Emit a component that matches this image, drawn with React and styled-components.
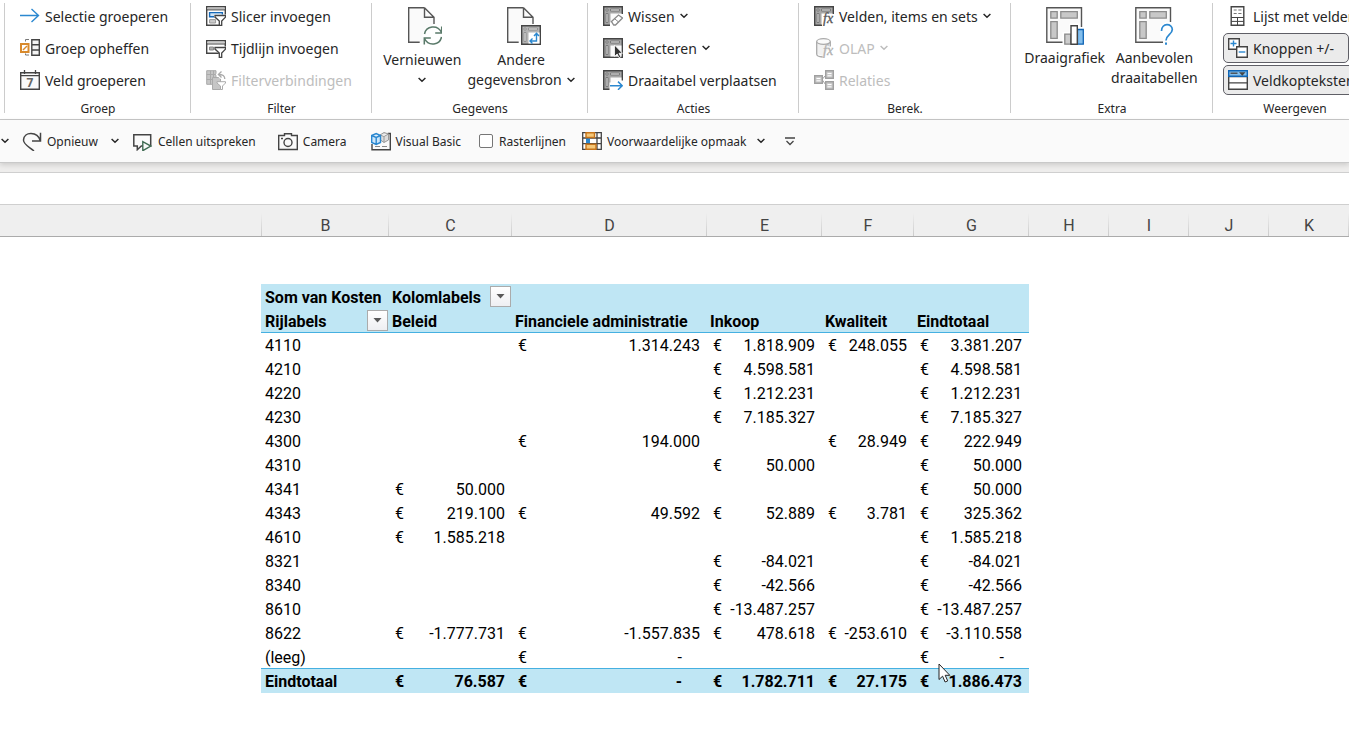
import React, { useState } from 'react'
import styled, { createGlobalStyle, css } from 'styled-components'

const GlobalStyle = createGlobalStyle`
  * {
    box-sizing: border-box;
  }
  body {
    margin: 0;
    background: #ffffff;
    overflow: hidden;
  }
  button, input {
    font: inherit;
    color: inherit;
    margin: 0;
  }
`

const Page = styled.div`
  display: flex;
  flex-direction: column;
  min-height: 100vh;
  overflow: hidden;
  font-family: 'Noto Sans', sans-serif;
  font-size: 14px;
  color: #262626;
`

/* ribbon */

const Ribbon = styled.div`
  display: flex;
  padding: 0 0 1px 4px;
  background: #ffffff;
  border-bottom: 1px solid #c8c8c8;
  overflow: hidden;
`

const Group = styled.section`
  display: flex;
  flex-direction: column;
  flex: none;
  width: ${(p) => p.$width}px;
  padding: 1px 10px 0;
  background: linear-gradient(#cccccc, #cccccc) 0 3px / 1px 110px no-repeat;
`

const GroupBody = styled.div`
  display: flex;
  flex-direction: ${(p) => (p.$row ? 'row' : 'column')};
  align-items: flex-start;
  justify-content: ${(p) => (p.$row ? 'center' : 'flex-start')};
  gap: 2px;
  height: 99px;
  padding-left: ${(p) => (p.$row ? 0 : 1)}px;
`

const GroupLabel = styled.div`
  padding-left: 2px;
  font-size: 12px;
  line-height: 18px;
  text-align: center;
`

const SmallButton = styled.button`
  display: flex;
  align-items: center;
  gap: 5px;
  height: 30px;
  padding: 0 4px;
  border: 1px solid transparent;
  border-radius: 5px;
  background: none;
  line-height: 20px;
  white-space: nowrap;

  &:disabled {
    color: #bdbdbd;
  }

  ${(p) =>
    p.$pressed &&
    css`
      min-width: 126px;
      background: #ebebeb;
      border-color: #5f5f66;
    `}
`

const ToolText = styled.span`
  padding-top: 2px;
`

const BigButton = styled.button`
  display: flex;
  flex-direction: column;
  align-items: center;
  gap: ${(p) => p.$gap}px;
  padding: 5px 2px 0;
  border: none;
  background: none;
  line-height: 20px;
  white-space: nowrap;
`

const Caption = styled.span`
  display: flex;
  flex-direction: column;
  align-items: center;
`

const CaptionLine = styled.span`
  display: flex;
  align-items: center;
  justify-content: center;
  gap: 5px;
  min-height: 20px;
`

/* quick access toolbar */

const QuickBar = styled.div`
  display: flex;
  align-items: center;
  height: 43px;
  padding-left: 1px;
  background: #fafafa;
  border-bottom: 1px solid #c9c9c9;
  box-shadow: 0 2px 5px rgba(0, 0, 0, 0.14);
  font-size: 12px;
  position: relative;
  white-space: nowrap;
`

const QuickButton = styled.button`
  display: flex;
  align-items: center;
  gap: 5px;
  height: 30px;
  padding: 0;
  margin-right: ${(p) => p.$after || 0}px;
  border: none;
  background: none;
`

const QuickMenu = styled.span`
  display: flex;
  align-items: center;
  gap: 10px;
`

const QuickCheck = styled.label`
  display: flex;
  align-items: center;
  gap: 6px;
  margin-right: 16px;
`

const CheckBox = styled.input`
  appearance: none;
  width: 14px;
  height: 14px;
  border: 1px solid #767676;
  border-radius: 2px;
  background: #ffffff;

  &:checked {
    background: #1f7a4a;
  }
`

/* sheet */

const BarGap = styled.div`
  height: 9px;
  background: #eeedec;
`

const FormulaBar = styled.input`
  display: block;
  width: 100%;
  height: 33px;
  padding: 0 12px;
  border: solid #cfcfcf;
  border-width: 1px 0;
  border-radius: 0;
  background: #ffffff;
  outline: none;
`

const ColumnHeads = styled.div`
  display: flex;
  height: 32px;
  padding-top: 8px;
  background: #efefef;
  border-bottom: 1px solid #ababab;
  overflow: hidden;
`

const ColumnHead = styled.div`
  flex: none;
  width: ${(p) => p.$width}px;
  background: linear-gradient(#efefef, #cbcbcb) right / 1px 100% no-repeat;
  font-family: Roboto, sans-serif;
  font-size: 16px;
  line-height: 25px;
  text-align: center;
  color: #444444;
`

const Sheet = styled.main`
  flex: 1;
  position: relative;
  padding: 47px 0 53px 261px;
  background: #ffffff;
`

const Pivot = styled.table`
  table-layout: fixed;
  width: 768px;
  border-collapse: separate;
  border-spacing: 0;
  font-family: Roboto, sans-serif;
  font-size: 16px;
  color: #000000;

  td, th {
    height: 24px;
    padding: 3px 0 0 3px;
    line-height: 20px;
    text-align: left;
    vertical-align: top;
    white-space: nowrap;
  }
  td:first-child, th:first-child {
    padding-left: 4px;
  }
  tbody th {
    font-weight: 400;
  }
  thead th {
    padding-top: 4px;
    background: #bfe6f4;
    font-weight: 700;
  }
  thead tr:last-child th {
    height: 25px;
  }
  thead tr:last-child th, tbody tr:last-child > * {
    border-bottom: 1px solid #45b0e1;
  }
  tfoot th, tfoot td {
    background: #bfe6f4;
    font-weight: 700;
  }
`

const HeadCell = styled.div`
  display: flex;
  align-items: flex-start;
  justify-content: space-between;
  height: 20px;
  padding-right: 1px;
`

const FilterButton = styled.button`
  display: flex;
  align-items: center;
  justify-content: center;
  width: 21px;
  height: 21px;
  margin-top: -2px;
  padding: 0;
  border: 1px solid #ababab;
  background: linear-gradient(#ffffff, #eeeff2);
`

const Money = styled.div`
  display: flex;
  justify-content: space-between;
  padding: 0 ${(p) => (p.$empty ? 25 : 7)}px 0 3px;
`

const Pointer = styled.svg`
  position: absolute;
  left: 938px;
  top: 426px;
`

/* icons */

const DARK = '#444444'
const BLUE = '#2b88d0'

const Svg = ({ size = 20, children, ...rest }) => (
  <svg width={size} height={size} viewBox={`0 0 ${size} ${size}`} fill="none" stroke={DARK} aria-hidden="true" {...rest}>
    {children}
  </svg>
)

const Chevron = () => (
  <svg width="8" height="6" viewBox="0 0 8 6" fill="none" stroke="currentColor" strokeWidth="1.5" aria-hidden="true">
    <path d="M.6 1L4 4.200 7.400 1" />
  </svg>
)

const Funnel = ({ color = DARK }) => (
  <path d="M9 9.5h10.5v1.6l-3.8 4v4.4h-2.4v-4.4L9 11.1z" fill="#fff" stroke={color} strokeWidth="1.3" />
)

const ArrowIcon = () => (
  <Svg stroke={BLUE} strokeWidth="1.4">
    <path d="M0 9.5h18.5M11.5 3l7 6.5-7 6.5" />
  </Svg>
)

const UngroupIcon = () => (
  <Svg>
    <path d="M5.5 3.5v-2H9M5.5 15.5v1.5H9" stroke="#777" />
    <path d="M1 6h7.5v8H1z" fill="#fff" stroke="#d98a2c" strokeWidth="2" />
    <path d="M3 12l4-4" stroke="#d98a2c" strokeWidth="1.4" />
    <path d="M11.8 1.7h7.5v15.6h-7.5zM11.8 6.8h7.5M11.8 12h7.5" fill="#f4f4f4" strokeWidth="1.4" />
  </Svg>
)

const CalendarIcon = () => (
  <Svg>
    <path d="M.7 2.7h18.6v16.6H.7z" fill="#fafafa" strokeWidth="1.4" />
    <path d="M.7 5.7h18.6M4.5 0v4M15.5 0v4" strokeWidth="1.3" />
    <text x="10" y="17" fontSize="12" fontWeight="700" textAnchor="middle" fill="#666" stroke="none">7</text>
  </Svg>
)

const SlicerIcon = () => (
  <Svg>
    <path d="M.7.7h18.6v18.6H.7z" fill="#fff" strokeWidth="1.4" />
    <path d="M1.4 1.4h17.2v2H1.4z" fill="#bbb" stroke="none" />
    <path d="M.7 3.9h18.6" />
    <path d="M3.6 6.6h12.8v4.2H3.6z" fill="#cfe4f7" stroke="#1769b8" strokeWidth="1.4" />
    <path d="M3.6 13.6h6v3.4h-6z" fill="#ccc" stroke="#999" />
    <path d="M13 20v-4.500L8 11V8.500h12V20z" fill="#fff" stroke="none" />
    <Funnel />
  </Svg>
)

const TimelineIcon = () => (
  <Svg>
    <path d="M.7 2.7h18.6v12.6H.7z" fill="#fff" strokeWidth="1.4" />
    <path d="M1.4 3.4h17.2v2H1.4z" fill="#ccc" stroke="none" />
    <path d="M.7 6h18.6" />
    <path d="M3.5 9h4v3h-4z" fill="#aaa" stroke="#888" />
    <path d="M13 20v-4.500L8 11V8.500h12V20z" fill="#fff" stroke="none" />
    <Funnel />
  </Svg>
)

const FilterLinkIcon = () => (
  <Svg stroke="#aaa">
    <path d="M.7.7H10v13.6H.7z" fill="#c6c6c6" />
    <path d="M.7 4.5H10M4.5.7v13.6M7.5.7v13.6M.7 9.5H10" />
    <path d="M6.5 7.5h8v12h-8z" fill="#c6c6c6" />
    <path d="M18.8 9.5c0-4-2-5-6.5-5M15.5 1l-3.6 3.5 3.6 3.5" stroke="#fff" strokeWidth="3" />
    <path d="M18.8 9c0-3.600-2-4.500-6.500-4.500M15.500 1.500l-3.100 3 3.100 3" strokeWidth="1.300" />
    <path d="M11 11.700h8.500v1.300l-3 3v3.500h-2v-3.500l-3.500-3z" fill="#fff" />
  </Svg>
)

const PivotBase = ({ stroke = DARK }) => (
  <>
    <path d="M.7.7h18.6v18.6H.7z" fill="#a6a6a6" stroke={stroke} strokeWidth="1.4" />
    <path d="M7.500 7.500h11v11h-11z" fill="#fafafa" stroke="none" />
    <path d="M3 3h2v2H3zM7.500 3h9v2h-9zM3 7.500h2v9H3z" fill="#d8d8d8" stroke="#6e6e6e" strokeWidth=".8" />
  </>
)

const ClearIcon = () => (
  <Svg>
    <PivotBase />
    <path d="M7 20V17l8-9h6v12z" fill="#fff" stroke="none" />
    <path d="M8.500 15.500l7-6.500 4 3-7 7h-1.800z" fill="#fff" stroke="#8a8a8a" strokeWidth="1.300" />
    <path d="M11.500 12.700l4 3.200" stroke="#8a8a8a" />
  </Svg>
)

const SelectIcon = () => (
  <Svg>
    <PivotBase />
    <path d="M11.500 7v11.500l2.700-2.500 1.800 3.700 1.800-.9-1.800-3.500h3.500z" fill="#333" stroke="#fff" strokeWidth=".8" />
  </Svg>
)

const MoveIcon = () => (
  <Svg>
    <PivotBase />
    <path d="M6.500 12.500h6v-2h8V20h-14z" fill="#fff" stroke="none" />
    <path d="M7 15.700h12M15 11.600l4.200 4.100-4.200 4.100" stroke={BLUE} strokeWidth="1.500" />
  </Svg>
)

const Fx = ({ color }) => (
  <text x="9" y="17" fontFamily="Liberation Serif, serif" fontStyle="italic" fontSize="14" fill={color} stroke={color} strokeWidth=".3">fx</text>
)

const FieldsIcon = () => (
  <Svg>
    <PivotBase />
    <path d="M8 8h12v12H8z" fill="#fff" stroke="none" />
    <Fx color="#555" />
  </Svg>
)

const OlapIcon = () => (
  <Svg stroke="#aaa" strokeWidth="1.300">
    <path d="M3 4h13v5l-7 9-6-2z" fill="#f1f1f1" stroke="none" />
    <path d="M2.700 3.500v12.500c0 1.500 2 2.800 6 3M16.300 3.500v5" />
    <ellipse cx="9.500" cy="3.500" rx="6.800" ry="2.800" fill="#fafafa" />
    <Fx color="#b0b0b0" />
  </Svg>
)

const RelationsIcon = () => (
  <Svg stroke="#a0a0a0">
    <path d="M8 9.500l3.500-4M8 9.500l3.500 5" />
    <path d="M.7 5.700h7.600v7.600H.7zM11.700.7h7.600v7.600h-7.600zM11.700 11.700h7.600v7.600h-7.600z" fill="#c9c9c9" strokeWidth="1.400" />
    <path d="M2.500 8.500h4M2.500 10.800h4M13.500 3.500h4M13.500 5.800h4M13.500 14.500h4M13.500 16.800h4" stroke="#fff" />
  </Svg>
)

const FieldListIcon = () => (
  <Svg>
    <path d="M3.200.7h12.600v18.600H3.200z" fill="#fff" strokeWidth="1.400" />
    <path d="M3.200 11.500h12.600M3.200 15.400h12.600M9.500 11.500v7.800" />
    <path d="M5.700 4h3M10.300 4h3.200M5.700 7.500h3M10.300 7.500h3.200" stroke="#777" />
  </Svg>
)

const PlusMinusIcon = () => (
  <Svg>
    <path d="M.7.7h10.600v10.600H.7z" fill="#fff" strokeWidth="1.400" />
    <path d="M5.500 2.500v6M2.500 5.500h6" stroke={BLUE} strokeWidth="1.400" />
    <path d="M8.700 8.700h10.600v10.600H8.700z" fill="#fff" strokeWidth="1.400" />
    <path d="M10.700 14h6.600" stroke={BLUE} strokeWidth="1.400" />
  </Svg>
)

const HeadersIcon = () => (
  <Svg>
    <path d="M.7 6.500h18.600v12.800H.7zM.7 12.900h18.600" fill="#fff" strokeWidth="1.400" />
    <path d="M.7.7h18.600v5.600H.7z" fill="#83beec" stroke="#0f64b4" strokeWidth="1.400" />
    <path d="M2.500 3.200h7" strokeWidth="1.300" />
    <path d="M11 2.300h6.500l-3.200 3.500z" fill={DARK} stroke="none" />
  </Svg>
)

const DocumentShape = () => (
  <>
    <path d="M6.700 1.700h15.800l9.500 9.600v25H6.700z" fill="#fafafa" stroke="none" />
    <path d="M22.500 1.700H6.700v34.600h11M22.500 1.700v9.600H32M22.500 1.700l9.500 9.600V18" stroke="#555" strokeWidth="1.400" />
  </>
)

const RefreshIcon = () => (
  <Svg size={40}>
    <DocumentShape />
    <circle cx="31" cy="29.500" r="10.500" fill="#fff" stroke="none" />
    <path d="M22.500 28c1.500-8 13-10 17-1.500M39.700 20.500V27h-6.500M39.500 31c-1.500 8-13 10-17 1.500M22.300 38.500V32h6.500" stroke="#5a7a6a" strokeWidth="1.500" />
  </Svg>
)

const SourceIcon = () => (
  <Svg size={40}>
    <DocumentShape />
    <g transform="translate(20 19)">
      <path d="M.7.7h18.600v18.600H.7z" fill="#b5b5b5" strokeWidth="1.400" />
      <path d="M7.500 7.500h11v11h-11z" fill="#fff" stroke="none" />
      <path d="M3 3h2v2H3zM7.500 3h9v2h-9zM3 7.500h2v9H3z" fill="#ddd" stroke="#888" strokeWidth=".8" />
      <path d="M15.500 8.500v7.500H9M13 11l2.500-2.700L18 11M11.500 13.500L9 16l2.500 2.500" stroke={BLUE} strokeWidth="1.400" />
    </g>
  </Svg>
)

const BigPivotShape = () => (
  <>
    <path d="M1.800 1.800h34.700v34.400H1.800z" fill="#fafafa" stroke="#555" strokeWidth="1.400" />
    <path d="M5.800 5.700h6.400v6.400H5.800zM15.800 5.700h16.500v6.400H15.800zM5.800 15.700h6.400v16.600H5.800z" fill="#c8c8c8" stroke="#8c8c8c" strokeWidth="1.300" />
  </>
)

const ChartIcon = () => (
  <Svg size={40}>
    <BigPivotShape />
    <path d="M17.500 40V26h7v-8.500h10V21H40v19z" fill="#fff" stroke="none" />
    <path d="M19.800 28.200h5.900v10h-5.900z" fill="#ccc" stroke="#888" strokeWidth="1.300" />
    <path d="M32.500 23.500h5.800v14.700h-5.800z" fill="#83beec" stroke="#0f64b4" strokeWidth="1.300" />
    <path d="M26 19.700h6.300v18.500H26z" fill="#fff" strokeWidth="1.400" />
  </Svg>
)

const RecommendIcon = () => (
  <Svg size={40}>
    <BigPivotShape />
    <path d="M29 40v-7.500l-3-4V20l6-4h9v24z" fill="#fff" stroke="none" />
    <path d="M27.500 25c0-8.500 10.800-7.800 10.800-1.500 0 5-6.300 5.500-6.300 11" stroke={BLUE} strokeWidth="1.700" />
    <path d="M32 36.500v2.200" stroke={BLUE} strokeWidth="2" />
  </Svg>
)

const RedoIcon = () => (
  <Svg strokeWidth="1.500">
    <path d="M18.500 1.700V10H10M18.300 9.800C15.500.3 2 .3 1.500 9c-.2 4.500 6 7 10.500 11" />
  </Svg>
)

const SpeakIcon = () => (
  <Svg>
    <path d="M.8 3.700h16.900V15H8.300l-4 3.700V15H.8z" fill="#fafafa" strokeWidth="1.500" />
    <path d="M9.800 10.700v9l8-4.600z" fill="#fafafa" stroke="#3f6b52" strokeWidth="1.400" />
  </Svg>
)

const CameraIcon = () => (
  <Svg strokeWidth="1.400">
    <path d="M.7 4.500h5.800V2.700h7v1.800h5.800v14H.7z" fill="#fafafa" />
    <circle cx="10" cy="11.500" r="4" />
    <path d="M3 7.500h2" />
  </Svg>
)

const BasicIcon = () => (
  <Svg>
    <path d="M1 13v5.700h18.300V2.500h-2.500" strokeWidth="1.400" />
    <path d="M4 15.500h5M11 15.500h5" stroke="#888" />
    <path d="M9 4l4-2.500L17.500 3v6L13 11.500 9.500 9zM9 4l4 1.500L17.500 3M13 5.500v6" fill="#ddd" stroke="#999" />
    <path d="M.7 4.500l4.500-2 4.300 2v7l-4.300 2-4.500-2zM.7 4.500l4.500 2 4.300-2M5.200 6.500v7" fill="#cbe5fa" stroke={BLUE} strokeWidth="1.400" />
  </Svg>
)

const FormatIcon = () => (
  <Svg>
    <path d="M.7 1.700h18.600v16.600H.7zM.7 7h18.600M.7 12.600h18.600M15 1.700v16.600M5 1.700v16.600" fill="#fff" strokeWidth="1.300" />
    <path d="M4 7.500h4v4.700H4z" fill={BLUE} stroke="none" />
    <path d="M4 1.700h8.500V6.500H4zM4 13.200h10v5.100H4z" fill="#f6c878" stroke="#c5741c" strokeWidth="1.400" />
  </Svg>
)

const CustomizeIcon = () => (
  <svg width="10" height="9" viewBox="0 0 10 9" fill="none" stroke={DARK} strokeWidth="1.300" aria-hidden="true">
    <path d="M0 1h10M1.500 4L5 7.500 8.500 4" />
  </svg>
)

/* data */

const columns = [
  ['A', 262],
  ['B', 127],
  ['C', 123],
  ['D', 195],
  ['E', 115],
  ['F', 92],
  ['G', 115],
  ['H', 80],
  ['I', 80],
  ['J', 80],
  ['K', 80],
]

const pivotWidths = [128, 123, 195, 115, 92, 115]

const rows = [
  ['4110', '', '1.314.243', '1.818.909', '248.055', '3.381.207'],
  ['4210', '', '', '4.598.581', '', '4.598.581'],
  ['4220', '', '', '1.212.231', '', '1.212.231'],
  ['4230', '', '', '7.185.327', '', '7.185.327'],
  ['4300', '', '194.000', '', '28.949', '222.949'],
  ['4310', '', '', '50.000', '', '50.000'],
  ['4341', '50.000', '', '', '', '50.000'],
  ['4343', '219.100', '49.592', '52.889', '3.781', '325.362'],
  ['4610', '1.585.218', '', '', '', '1.585.218'],
  ['8321', '', '', '-84.021', '', '-84.021'],
  ['8340', '', '', '-42.566', '', '-42.566'],
  ['8610', '', '', '-13.487.257', '', '-13.487.257'],
  ['8622', '-1.777.731', '-1.557.835', '478.618', '-253.610', '-3.110.558'],
  ['(leeg)', '', '-', '', '', '-'],
]

const totals = ['Eindtotaal', '76.587', '-', '1.782.711', '27.175', '1.886.473']

const Filter = ({ label }) => (
  <FilterButton aria-label={label}>
    <svg width="9" height="5" viewBox="0 0 9 5" aria-hidden="true">
      <path d="M.5 0h8l-4 4.500z" fill="#595959" />
    </svg>
  </FilterButton>
)

const PivotRow = ({ cells }) => (
  <tr>
    <th scope="row">{cells[0]}</th>
    {cells.slice(1).map((value, i) => (
      <td key={i}>
        {value && (
          <Money $empty={value === '-'}>
            <span>€</span>
            <span>{value}</span>
          </Money>
        )}
      </td>
    ))}
  </tr>
)

const Tool = ({ icon, children, menu, ...rest }) => (
  <SmallButton {...rest}>
    {icon}
    <ToolText>{children}</ToolText>
    {menu && <Chevron />}
  </SmallButton>
)

const RibbonGroup = ({ label, width, row, children }) => (
  <Group $width={width} aria-label={label}>
    <GroupBody $row={row}>{children}</GroupBody>
    <GroupLabel>{label}</GroupLabel>
  </Group>
)

const App = () => {
  const [buttons, setButtons] = useState(true)
  const [headers, setHeaders] = useState(true)

  return (
    <Page>
      <GlobalStyle />
      <Ribbon>
        <RibbonGroup label="Groep" width={186}>
          <Tool icon={<ArrowIcon />}>Selectie groeperen</Tool>
          <Tool icon={<UngroupIcon />}>Groep opheffen</Tool>
          <Tool icon={<CalendarIcon />}>Veld groeperen</Tool>
        </RibbonGroup>
        <RibbonGroup label="Filter" width={181}>
          <Tool icon={<SlicerIcon />}>Slicer invoegen</Tool>
          <Tool icon={<TimelineIcon />}>Tijdlijn invoegen</Tool>
          <Tool icon={<FilterLinkIcon />} disabled>Filterverbindingen</Tool>
        </RibbonGroup>
        <RibbonGroup label="Gegevens" width={216} row>
          <BigButton $gap={4}>
            <RefreshIcon />
            <Caption>
              <CaptionLine>Vernieuwen</CaptionLine>
              <CaptionLine><Chevron /></CaptionLine>
            </Caption>
          </BigButton>
          <BigButton $gap={4}>
            <SourceIcon />
            <Caption>
              <CaptionLine>Andere</CaptionLine>
              <CaptionLine>gegevensbron <Chevron /></CaptionLine>
            </Caption>
          </BigButton>
        </RibbonGroup>
        <RibbonGroup label="Acties" width={211}>
          <Tool icon={<ClearIcon />} menu>Wissen</Tool>
          <Tool icon={<SelectIcon />} menu>Selecteren</Tool>
          <Tool icon={<MoveIcon />}>Draaitabel verplaatsen</Tool>
        </RibbonGroup>
        <RibbonGroup label="Berek." width={212}>
          <Tool icon={<FieldsIcon />} menu>Velden, items en sets</Tool>
          <Tool icon={<OlapIcon />} menu disabled>OLAP</Tool>
          <Tool icon={<RelationsIcon />} disabled>Relaties</Tool>
        </RibbonGroup>
        <RibbonGroup label="Extra" width={202} row>
          <BigButton $gap={2}>
            <ChartIcon />
            <Caption>
              <CaptionLine>Draaigrafiek</CaptionLine>
            </Caption>
          </BigButton>
          <BigButton $gap={2}>
            <RecommendIcon />
            <Caption>
              <CaptionLine>Aanbevolen</CaptionLine>
              <CaptionLine>draaitabellen</CaptionLine>
            </Caption>
          </BigButton>
        </RibbonGroup>
        <RibbonGroup label="Weergeven" width={164}>
          <Tool icon={<FieldListIcon />}>Lijst met velden</Tool>
          <Tool icon={<PlusMinusIcon />} $pressed={buttons} aria-pressed={buttons} onClick={() => setButtons(!buttons)}>
            Knoppen +/-
          </Tool>
          <Tool icon={<HeadersIcon />} $pressed={headers} aria-pressed={headers} onClick={() => setHeaders(!headers)}>
            Veldkopteksten
          </Tool>
        </RibbonGroup>
      </Ribbon>

      <QuickBar>
        <QuickButton $after={13} aria-label="Ongedaan maken"><Chevron /></QuickButton>
        <QuickButton $after={13}><RedoIcon />Opnieuw</QuickButton>
        <QuickButton $after={14} aria-label="Opnieuw opties"><Chevron /></QuickButton>
        <QuickButton $after={22}><SpeakIcon />Cellen uitspreken</QuickButton>
        <QuickButton $after={24}><CameraIcon />Camera</QuickButton>
        <QuickButton $after={18}><BasicIcon />Visual Basic</QuickButton>
        <QuickCheck>
          <CheckBox type="checkbox" />
          Rasterlijnen
        </QuickCheck>
        <QuickButton $after={20}>
          <FormatIcon />
          <QuickMenu>Voorwaardelijke opmaak<Chevron /></QuickMenu>
        </QuickButton>
        <QuickButton aria-label="Werkbalk aanpassen"><CustomizeIcon /></QuickButton>
      </QuickBar>

      <BarGap />
      <FormulaBar aria-label="Formulebalk" />

      <ColumnHeads>
        {columns.map(([name, width]) => (
          <ColumnHead key={name} $width={width}>{name === 'A' ? '' : name}</ColumnHead>
        ))}
      </ColumnHeads>

      <Sheet>
        <Pivot>
          <colgroup>
            {pivotWidths.map((width, i) => (
              <col key={i} width={width} />
            ))}
          </colgroup>
          <thead>
            <tr>
              <th>Som van Kosten</th>
              <th>
                <HeadCell>Kolomlabels <Filter label="Kolomlabels filteren" /></HeadCell>
              </th>
              <th colSpan={4} />
            </tr>
            <tr>
              <th>
                <HeadCell>Rijlabels <Filter label="Rijlabels filteren" /></HeadCell>
              </th>
              <th>Beleid</th>
              <th>Financiele administratie</th>
              <th>Inkoop</th>
              <th>Kwaliteit</th>
              <th>Eindtotaal</th>
            </tr>
          </thead>
          <tbody>
            {rows.map((row) => (
              <PivotRow key={row[0]} cells={row} />
            ))}
          </tbody>
          <tfoot>
            <PivotRow cells={totals} />
          </tfoot>
        </Pivot>
        <Pointer width="13" height="21" viewBox="0 0 13 21" aria-hidden="true">
          <path d="M1 1v15.500l3.600-3.300 2.500 5.800 2.600-1.100-2.500-5.600h4.600z" fill="#fff" stroke="#222" />
        </Pointer>
      </Sheet>
    </Page>
  )
}

export default App
